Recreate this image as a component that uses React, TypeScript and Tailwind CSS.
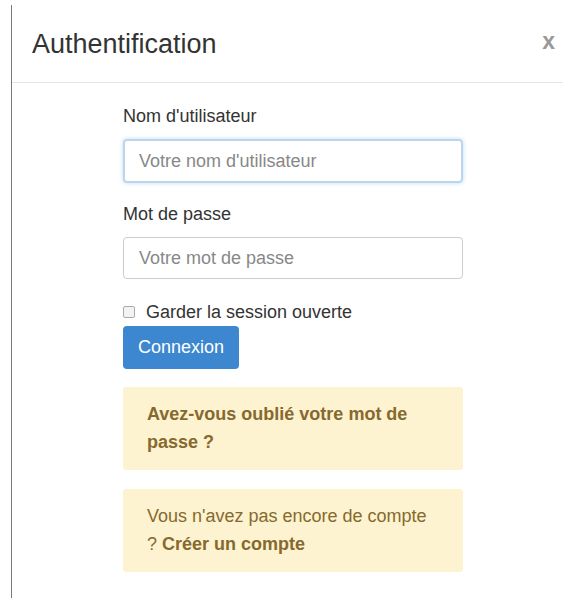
export default function App() {
  return (
    <div
      className="w-[563px] h-[603px] bg-white overflow-hidden pl-[11px] pt-[5px]"
      style={{ fontFamily: '"Liberation Sans", Arial, sans-serif' }}
    >
      <div className="h-[593px] border-l border-[#7a7a7a] flex flex-col">
        {/* modal header */}
        <div className="h-[78px] border-b border-[#e5e5e5] flex items-center justify-between pl-[20px] pr-[8px]">
          <h4 className="text-[27px] text-[#333] leading-none pt-[2px]">Authentification</h4>
          <span className="text-[23px] font-bold text-[#999] leading-none pb-[4px]">x</span>
        </div>

        {/* modal body */}
        <div className="pl-[111px] pt-[23px] w-[463px]">
          <form className="w-[340px] flex flex-col text-[18px] text-[#333]">
            <label className="leading-[20px]">Nom d'utilisateur</label>
            <input
              type="text"
              placeholder="Votre nom d'utilisateur"
              className="mt-[13px] h-[44px] rounded-[4px] border-2 border-[#bcd4ec] px-[14px] text-[18px] placeholder:text-[#888] outline-none shadow-[0_0_4px_rgba(102,175,233,0.45)]"
            />

            <label className="mt-[21px] leading-[20px]">Mot de passe</label>
            <input
              type="password"
              placeholder="Votre mot de passe"
              className="mt-[13px] h-[42px] rounded-[4px] border border-[#ccc] px-[15px] text-[18px] placeholder:text-[#888] outline-none"
            />

            <label className="mt-[23px] flex items-center leading-[20px]">
              <span className="w-[12px] h-[12px] rounded-[2px] border border-[#aaa] bg-[#f3f3f3] mr-[11px]" />
              Garder la session ouverte
            </label>

            <button
              type="button"
              className="mt-[4px] self-start w-[116px] h-[43px] rounded-[4px] bg-[#3c87d0] text-white text-[18px] text-left pl-[15px]"
            >
              Connexion
            </button>

            <div className="mt-[18px] h-[83px] rounded-[3px] bg-[#fdf3d0] px-[24px] py-[13px] leading-[28px] text-[#86692f]">
              <b>Avez-vous oublié votre mot de passe ?</b>
            </div>

            <div className="mt-[19px] h-[83px] rounded-[3px] bg-[#fdf3d0] px-[24px] py-[13px] leading-[28px] text-[#86692f]">
              <span>Vous n'avez pas encore de compte</span> <span>?</span> <b>Créer un compte</b>
            </div>
          </form>
        </div>
      </div>
    </div>
  );
}
